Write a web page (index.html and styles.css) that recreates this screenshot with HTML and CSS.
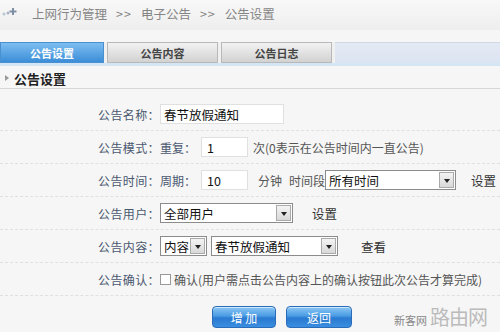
FILE: index.html
```html
<!DOCTYPE html>
<html>
<head>
<meta charset="utf-8">
<link rel="stylesheet" href="styles.css">
</head>
<body>
<div class="page">
  <div class="crumb">
    <svg class="crumb-icon" width="16" height="12" viewBox="0 0 16 12">
      <circle cx="2" cy="8" r="1.5" fill="#b8c4d0"/>
      <circle cx="6" cy="7" r="1.5" fill="#a8b4c4"/>
      <path d="M11 2v7M7.5 5.5h7" stroke="#7f8fa6" stroke-width="2"/>
    </svg>
    <span class="crumb-text">上网行为管理<span class="sep">&gt;&gt;</span>电子公告<span class="sep">&gt;&gt;</span>公告设置</span>
  </div>
  <div class="tabs">
    <div class="tab active">公告设置</div>
    <div class="tab">公告内容</div>
    <div class="tab">公告日志</div>
    <div class="tab-fill"></div>
  </div>
  <div class="section-title"><span class="arrow"></span>公告设置</div>
  <div class="form">
    <div class="row">
      <div class="label">公告名称：</div>
      <div class="field"><span class="input w124">春节放假通知</span></div>
    </div>
    <div class="row">
      <div class="label">公告模式：</div>
      <div class="field"><span class="sub">重复：</span><span class="input w47">1</span><span class="note">次(0表示在公告时间内一直公告)</span></div>
    </div>
    <div class="row">
      <div class="label">公告时间：</div>
      <div class="field"><span class="sub">周期：</span><span class="input w47">10</span><span class="note-min">分钟</span><span class="note2">时间段</span><span class="select w131">所有时间<span class="drop"></span></span><span class="link">设置</span></div>
    </div>
    <div class="row">
      <div class="label">公告用户：</div>
      <div class="field"><span class="select w133">全部用户<span class="drop"></span></span><span class="link l2">设置</span></div>
    </div>
    <div class="row">
      <div class="label">公告内容：</div>
      <div class="field"><span class="select w47s">内容<span class="drop"></span></span><span class="select w127">春节放假通知<span class="drop"></span></span><span class="link l3">查看</span></div>
    </div>
    <div class="row">
      <div class="label">公告确认：</div>
      <div class="field"><span class="check"></span><span class="note3">确认(用户需点击公告内容上的确认按钮此次公告才算完成)</span></div>
    </div>
  </div>
  <div class="buttons">
    <span class="btn">增 加</span>
    <span class="btn b2">返回</span>
    <span class="mark"><span class="mark-s">新客网</span><span class="mark-b">路由网</span></span>
  </div>
</div>
</body>
</html>
```

FILE: styles.css
```css
* { box-sizing: border-box; }
body {
  margin: 0;
  font-family: "Noto Sans CJK SC", "Liberation Sans", sans-serif;
  font-size: 12px;
  color: #333;
  background: #f6f6f6;
}
.page {
  width: 500px;
  height: 332px;
  overflow: hidden;
  background: #f6f6f6;
}
.crumb {
  height: 30px;
  display: flex;
  align-items: center;
  padding-left: 2px;
  background: linear-gradient(#f8f8f8, #eeeeee);
}
.crumb-icon { margin-right: 14px; margin-top: -6px; }
.crumb-text {
  color: #858585;
  font-size: 12.5px;
  margin-top: -4px;
}
.sep { margin: 0 9px; letter-spacing: 1px; }
.tabs {
  margin-top: 12px;
  height: 24px;
  display: flex;
  border-bottom: 3px solid #d4e6f4;
  background: #f0f0f0;
}
.tab {
  width: 111px;
  height: 21px;
  margin-right: 3px;
  display: flex;
  align-items: center;
  justify-content: center;
  font-size: 11px;
  font-weight: bold;
  color: #444;
  background: linear-gradient(#f2f2f2, #d2d2d2);
  border: 1px solid #b8b8b8;
}
.tab.active {
  width: 104px;
  color: #fff;
  background: linear-gradient(#7dbdf0, #3c8ed8);
  border-color: #4a90d0;
  margin-right: 3px;
}
.tab-fill {
  flex: 1;
  height: 21px;
  background: linear-gradient(#e4eaf4, #dce4f2);
  border-top: 1px solid #d0d8e4;
}
.section-title {
  height: 23px;
  display: flex;
  align-items: center;
  padding-left: 5px;
  padding-top: 2px;
  font-size: 13px;
  font-weight: bold;
  color: #222;
  border-bottom: 1px solid #d6d6d6;
}
.arrow {
  width: 0; height: 0;
  border-left: 4px solid #999;
  border-top: 3px solid transparent;
  border-bottom: 3px solid transparent;
  margin-right: 5px;
}
.form {
  margin-top: 9px;
}
.row {
  height: 33px;
  display: grid;
  grid-template-columns: 160px 1fr;
  align-items: center;
  border-bottom: 1px dashed #e0e0e0;
}
.label {
  text-align: right;
  color: #4a5870;
  font-size: 12px;
  letter-spacing: 0.4px;
}
.field {
  display: flex;
  align-items: center;
  color: #555;
}
.sub { color: #4a5870; width: 41px; }
.input, .select {
  height: 20px;
  border: 1px solid #d2d2d2;
  background: #fff;
  display: inline-flex;
  align-items: center;
  padding-left: 3px;
  color: #111;
  font-size: 12.5px;
  position: relative;
}
.input { border-color: #e0e0e0; }
.w124 { width: 124px; }
.w47 { width: 47px; padding-left: 5px; }
.w133 { width: 133px; }
.w131 { width: 131px; }
.w47s { width: 47px; }
.w127 { width: 127px; margin-left: 4px; }
.select { border-color: #8c8c8c; }
.drop {
  position: absolute;
  right: 1px;
  top: 1px;
  width: 15px;
  height: 16px;
  border: 1px solid #aaa;
  background: linear-gradient(#f4f4f4, #d8d8d8);
}
.drop::after {
  content: "";
  position: absolute;
  left: 4px;
  top: 6px;
  border-top: 4px solid #222;
  border-left: 3px solid transparent;
  border-right: 3px solid transparent;
}
.note { margin-left: 5px; color: #555; }
.note-min { margin-left: 10px; color: #555; }
.note2 { margin-left: 7px; color: #555; }
.link { margin-left: 15px; color: #333; font-size: 12.5px; }
.l2 { margin-left: 19px; }
.l3 { margin-left: 23px; }
.check {
  width: 11px;
  height: 11px;
  border: 1px solid #999;
  background: #fff;
  margin-right: 3px;
}
.note3 { color: #555; font-size: 12px; }
.buttons {
  display: flex;
  align-items: center;
  padding-left: 212px;
  margin-top: 10px;
  height: 22px;
}
.btn {
  width: 64px;
  height: 22px;
  border-radius: 4px;
  border: 1px solid #2a6cb8;
  background: linear-gradient(#8cc8f4 0%, #4a9be4 45%, #2a7ad0 55%, #3a8ee0 100%);
  color: #fff;
  font-size: 12px;
  display: flex;
  align-items: center;
  justify-content: center;
  box-shadow: inset 0 1px 0 rgba(255,255,255,0.6);
}
.b2 { width: 66px; margin-left: 10px; }
.mark {
  margin-left: 42px;
  display: flex;
  align-items: flex-end;
  color: #999;
}
.mark-s { font-size: 11px; margin-right: 3px; color: #888; }
.mark-b { font-size: 20px; color: #bbb; letter-spacing: -1px; line-height: 22px; }
```
